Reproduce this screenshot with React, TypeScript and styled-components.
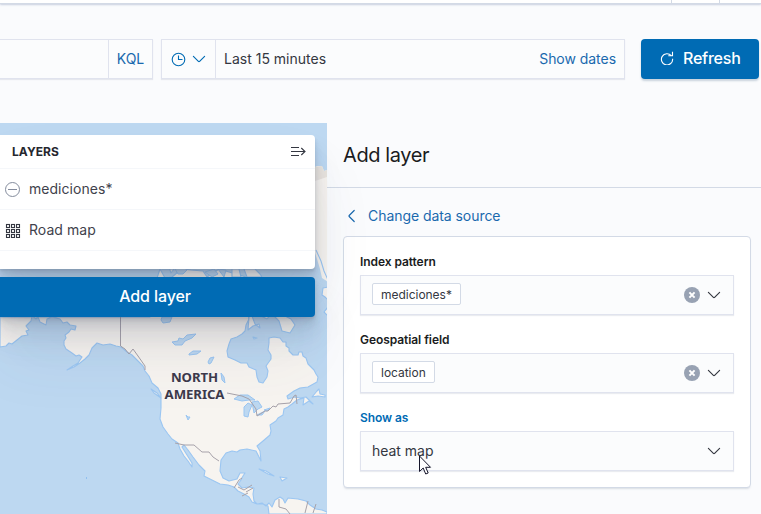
import React from "react";
import styled, { createGlobalStyle } from "styled-components";

const GlobalStyle = createGlobalStyle`
  * { box-sizing: border-box; }
  html, body { margin: 0; overflow: hidden; }
  body {
    background: #fafbfd;
    color: #343741;
    font: 400 14px/20px Inter, "Liberation Sans", sans-serif;
    letter-spacing: -0.005em;
  }
  button { font: inherit; letter-spacing: inherit; border: 0; padding: 0; background: none; }
  svg { display: block; flex: none; }
`;

const Page = styled.div`
  width: 761px;
  height: 514px;
  display: flex;
  flex-direction: column;
  overflow: hidden;
`;

const TopBar = styled.header`
  height: 4px;
  flex: none;
  display: flex;
  justify-content: flex-end;
  padding-right: 41px;
  background: #fff;
  border-bottom: 1px solid #d3dae6;
  box-shadow: 0 1px 2px rgba(130, 145, 180, 0.4);
`;

const TopBarCell = styled.div`
  width: 49px;
  border: solid #d3dae6;
  border-width: 0 1px;
`;

const QueryBar = styled.div`
  display: flex;
  height: 40px;
  flex: none;
  margin: 35px 0 44px;
`;

const ControlGroup = styled.div<{ $width: number; $gap: number; $open?: boolean }>`
  display: flex;
  width: ${(p) => p.$width}px;
  margin-right: ${(p) => p.$gap}px;
  border: 1px solid #e0e3ee;
  border-left-width: ${(p) => (p.$open ? 0 : 1)}px;
  background: #fbfcfd;
  box-shadow: 0 1px 1px rgba(152, 162, 179, 0.2);
`;

const QueryInput = styled.div`
  flex: 1;
  border-right: 1px solid #e0e3ee;
`;

const LinkButton = styled.button`
  width: 43px;
  color: #1a69ae;
`;

const QuickSelect = styled.button`
  display: flex;
  align-items: center;
  gap: 6px;
  width: 54px;
  padding-left: 9px;
  border-right: 1px solid #e0e3ee;
  color: #006bb4;
`;

const DateText = styled.span`
  flex: 1;
  padding-left: 8px;
  line-height: 38px;
  letter-spacing: 0;
`;

const ShowDates = styled.span`
  padding-right: 8px;
  line-height: 38px;
  color: #1a69ae;
  letter-spacing: -0.003em;
`;

const RefreshButton = styled.button`
  display: flex;
  align-items: center;
  width: 118px;
  padding: 0 0 2px 19px;
  gap: 9px;
  border-radius: 4px;
  background: #006bb4;
  color: #fff;
  font-size: 16px;
  font-weight: 500;
  letter-spacing: -0.014em;
  box-shadow: 0 2px 2px rgba(54, 97, 126, 0.25);
`;

const Body = styled.main`
  display: flex;
  flex: 1;
  min-height: 0;
`;

const MapArea = styled.section`
  position: relative;
  z-index: 1;
  width: 327px;
  flex: none;
`;

const MapSvg = styled.svg`
  width: 327px;
  height: 391px;
`;

const LayerControl = styled.div`
  position: absolute;
  top: 12px;
  left: 0;
  width: 315px;
  display: flex;
  flex-direction: column;
  gap: 8px;
`;

const deepShadow = `
  0 40px 64px rgba(65, 78, 101, 0.08), 0 24px 32px rgba(65, 78, 101, 0.08),
  0 16px 16px rgba(65, 78, 101, 0.08), 0 8px 8px rgba(65, 78, 101, 0.09),
  0 4px 4px rgba(65, 78, 101, 0.1), 0 2px 2px rgba(65, 78, 101, 0.1)`;

const LayersCard = styled.div`
  height: 134px;
  background: #fff;
  border-radius: 0 4px 4px 0;
  box-shadow: ${deepShadow};
`;

const LayersHeader = styled.div`
  display: flex;
  align-items: center;
  justify-content: space-between;
  height: 34px;
  padding: 0 9px 0 12px;
  border-bottom: 1px solid #f5f7fa;
  color: #25272e;
  font-size: 12px;
  font-weight: 700;
  letter-spacing: 0.004em;
`;

const LayerRow = styled.div`
  display: flex;
  align-items: center;
  height: 41px;
  gap: 8px;
  padding-left: 5px;
  border-bottom: 1px solid #f5f7fa;
  color: #3f424c;
  letter-spacing: 0.003em;
`;

const AddLayerButton = styled.button`
  height: 40px;
  padding-right: 5px;
  padding-bottom: 2px;
  border-radius: 0 4px 4px 0;
  background: #006bb4;
  color: #fff;
  font-size: 16px;
  font-weight: 500;
  letter-spacing: -0.008em;
  box-shadow: ${deepShadow};
`;

const Panel = styled.aside`
  flex: 1;
  display: flex;
  flex-direction: column;
`;

const PanelHeader = styled.h2`
  margin: 0;
  height: 65px;
  padding: 0 0 1px 16px;
  border-bottom: 1px solid #d3dae6;
  color: #1a1c21;
  font-size: 20px;
  font-weight: 400;
  line-height: 64px;
  letter-spacing: -0.02em;
`;

const BackLink = styled.button`
  display: flex;
  align-items: center;
  height: 20px;
  margin: 18px 0 10px 18px;
  gap: 9px;
  color: #1a69ae;
  letter-spacing: -0.004em;
`;

const FormCard = styled.div`
  display: flex;
  flex-direction: column;
  gap: 16px;
  width: 408px;
  height: 252px;
  margin-left: 16px;
  padding: 16px;
  background: #fff;
  border: 1px solid #d3dae6;
  border-radius: 4px;
  box-shadow: 0 2px 2px -1px rgba(152, 162, 179, 0.35);
`;

const Field = styled.div<{ $focused?: boolean }>`
  display: flex;
  flex-direction: column;
  gap: 4px;
  height: 62px;
  color: ${(p) => (p.$focused ? "#006bb4" : "#1a1c21")};
  font-size: 12px;
  font-weight: 600;
  line-height: 18px;
`;

const SelectBox = styled.div`
  display: flex;
  align-items: center;
  width: 374px;
  height: 40px;
  gap: 7px;
  padding: 0 12px 0 11px;
  border: 1px solid #e0e3ee;
  background: #fbfcfd;
  box-shadow: 0 1px 1px rgba(152, 162, 179, 0.2);
  color: #343741;
  font-weight: 400;
`;

const Pill = styled.span`
  height: 22px;
  margin: 0 auto 2px 0;
  padding: 0 8px;
  border: 1px solid #d3dae6;
  border-radius: 2px;
  background: #fff;
  line-height: 21px;
  letter-spacing: -0.002em;
`;

const SelectText = styled.span`
  margin-right: auto;
  font-size: 14px;
  letter-spacing: -0.002em;
`;

const Cursor = styled.svg`
  position: absolute;
  left: 418px;
  top: 455px;
  z-index: 2;
`;

const Chevron = () => (
  <svg width="14" height="14" viewBox="0 0 14 14" fill="none" stroke="currentColor" strokeWidth="1.15" strokeLinecap="round">
    <path d="M1.4 4.4 6.4 9.3q.6.6 1.2 0l5-4.9" />
  </svg>
);

const ClearIcon = () => (
  <svg width="16" height="16" viewBox="0 0 16 16">
    <circle cx="8" cy="8" r="8" fill="#98a2b3" />
    <path d="m5.400 5.400 5.200 5.200m0-5.200-5.200 5.200" stroke="#fff" strokeWidth="2" />
  </svg>
);

const LAND = `M0 347 6 346 9 343 12 344 17 340 22 336 28 335 26 331 29 330 26 326 31 321 32 316 36 319
 38 317 40 322 46 325 47 319 52 317 60 319 63 323 67 322 70 325 76 326 75 330 71 329 69 332 65 335
 66 338 64 341 64 345 66 349 72 353 76 356 79 355 82 357 78 363 73 366 67 370 74 367 80 363 85 359
 89 355 92 348 97 343 103 345 110 344 116 346 121 347 127 352 132 355 138 361 143 366 145 371
 149 376 152 383 158 388 161 394 161 408 160 419 163 427 168 434 172 439 178 443 180 449 184 456
 188 461 192 467 192 463 187 455 182 447 184 445 188 450 193 457 199 465 205 471 204 476 212 480
 220 484 228 485 234 487 238 491 244 494 249 497 252 502 257 504 262 503 266 506 269 503 272 507
 275 500 280 497 283 499 285 503 288 498 298 499 306 501 310 505 316 509 322 510 327 512 327 514
 269 514 268 506 263 504 257 504 254 501 253 494 254 488 248 487 242 488 238 484 241 480
 243 476 245 473 240 473 237 479 229 481 223 478 220 471 221 460 226 453 232 451 237 452 240 450
 247 449 256 451 259 457 261 461 260 451 257 446 263 441 270 435 271 431 270 425 276 421 278 418
 283 415 284 409 288 407 292 404 297 400 304 398 303 405 309 401 313 404 306 397 300 398 295 397
 288 399 287 396 294 391 300 388 308 387 317 382 318 377 316 374 314 370 308 364 306 358 303 356
 302 352 299 352 298 355 293 355 289 351 289 348 286 346 286 342 283 342 280 338 274 337
 269 338 269 343 268 350 271 355 271 359 266 366 268 371 267 377 263 383 259 382 257 377 256 370
 249 367 247 363 241 363 235 360 228 357 227 351 229 344 231 339 237 337 242 334 245 331 246 325
 249 319 246 277 219 269 207 277 203 271 191 270 184 269 178 272 172 277 165 278 160 269 155 284
 150 317 120 317 0 317Z`;

const WorldMap = () => (
  <MapSvg viewBox="0 123 327 391">
    <rect y="123" width="327" height="391" fill="#bdd8f1" />
    <g fill="#f7f4f0" stroke="#9bc6f2" strokeWidth="1.100" strokeLinejoin="round">
      <path d={LAND} />
      <path d="M315 167 317 166 322 166 324 171 327 170 328 282 322 278 320 269 317 259 313 247Z" stroke="none" />
      <path d="m316 250 5 11 3 10 4 9m0 7-5 1-1 7 3 2 3 3m0 7-4 5 4 4" />
      <path d="m249 317-1 13 5-4 6-2 1 4-5-4-3-8m7-1 8 4 4-5m4 3 4 4 3 10 8 2 5-8-4-6-6-3-3-8ZM162 269l5-7 4 11 3-4ZM232 269l7 0 2 8h-9Zm12 0h11l5 5 2 3h-15Z" />
      <path d="M312 397 317 391 319 389 320 394 325 395 325 397 318 396ZM259 469 266 471 274 476 268 474ZM280 477 287 478 282 481ZM253 337l4 1-3 1zM151 389l6 4 4 5-7-5Z" />
    </g>
    <path d="M315 167 322 166 324 171 327 170V177L315 181Z" fill="#e9e4df" />
    <g fill="#bdd8f1" stroke="#9bc6f2" strokeWidth="1">
      <path d="m172 342 6-1 1-3 4 1 4-4 9-1-4 4-7 3-3 4-7 0Zm17 12 4-3 8 0-4 3-8 1Zm19 8 2-4 4-1-3 6-2 1Z" />
      <path d="m162 317 10 0-2 5-7 1-2-3ZM221 373l3 4 1 6-3-3ZM186 415l2 2 2 0-2 3Z" />
      <path d="m234 399 6-4 8 0 7 5-6 0-7 1ZM244 407l4-4 4 2-3 7-1 5-4-1ZM252 402l6-1 4 6-4 2-4 4ZM257 415l8-4-3 4ZM264 410l6-2-3 3Z" />
      <path d="m175 269 8-2 4 3-4 4-5 0Zm30 3 9-3 4 5-6 3ZM218 269l8 1-2 7Z" />
    </g>
    <g fill="none" stroke="#a7a2aa" strokeWidth="1">
      <path d="M120.500 317V346L125 349 129 354 133 349 138 356 145 366 145 370" />
      <path d="m227 393 15 3 7 3 7 10 1 7 8-5 3 0 5-5 3 1 2-3 12-1 4-7 2-1 1 9M175 443l9 2 10 0 8 7 7 0 4 5 6 4M234 488l5-8 3-2m-4 9 6 3 8-5M246 492l7-4m-11 8 6-3m31 6 0 8 7 2 4 5m18-13-3 12m11-9-3 9" />
    </g>
    <path d="M86 477h1v2h-1Z" fill="#91c0f0" />
    <g fill="#3c394b" stroke="#f8f6f4" strokeWidth="2" paintOrder="stroke" fontFamily="Noto Sans, sans-serif" fontSize="13.200" fontWeight="700" textAnchor="middle">
      <text x="194.500" y="382">NORTH</text>
      <text x="194.500" y="398.500">AMERICA</text>
    </g>
  </MapSvg>
);

const ClockIcon = () => (
  <svg width="15" height="15" viewBox="0 0 15 15" fill="none" stroke="currentColor" strokeWidth="1.100">
    <circle cx="7.500" cy="7.500" r="6.300" />
    <path d="M7.500 3.500v4h4" />
  </svg>
);

const RefreshIcon = () => (
  <svg width="14" height="14" viewBox="0 0 14 14" fill="none" stroke="currentColor" strokeWidth="1.100">
    <path d="M11.300 4.700A5.600 5.600 0 1 0 12.600 7.800M12.500.800v4H8.300" />
  </svg>
);

const CollapseIcon = () => (
  <svg width="16" height="14" viewBox="0 0 16 14" fill="none" stroke="#343741" strokeWidth="1.100">
    <path d="M1 2.500h8M1 6.500h14M1 10.500h8M11.300 3 15 6.500 11.300 10" />
  </svg>
);

const MinusIcon = () => (
  <svg width="16" height="16" viewBox="0 0 16 16" fill="none" stroke="#848c9d">
    <circle cx="7.500" cy="8.500" r="7" />
    <path d="M3 8.500h9" />
  </svg>
);

const CELLS = [1.5, 6.5, 11.5];

const GridIcon = () => (
  <svg width="16" height="16" viewBox="0 0 16 16" fill="none" stroke="#343741" strokeWidth="1.100">
    {CELLS.map((y) => CELLS.map((x) => <rect key={`${x}-${y}`} x={x} y={y + 1} width="3" height="3" />))}
  </svg>
);

const BackIcon = () => (
  <svg width="14" height="14" viewBox="0 0 14 14" fill="none" stroke="currentColor" strokeWidth="1.200" strokeLinecap="round">
    <path d="M9.200 1.500 4.200 6.500q-.5.5 0 1l5 5" />
  </svg>
);

export default function App() {
  return (
    <Page>
      <GlobalStyle />
      <TopBar>
        <TopBarCell />
      </TopBar>
      <QueryBar>
        <ControlGroup $width={153} $gap={8} $open>
          <QueryInput />
          <LinkButton>KQL</LinkButton>
        </ControlGroup>
        <ControlGroup $width={464} $gap={16}>
          <QuickSelect>
            <ClockIcon />
            <Chevron />
          </QuickSelect>
          <DateText>Last 15 minutes</DateText>
          <ShowDates>Show dates</ShowDates>
        </ControlGroup>
        <RefreshButton>
          <RefreshIcon />
          Refresh
        </RefreshButton>
      </QueryBar>
      <Body>
        <MapArea>
          <WorldMap />
          <LayerControl>
            <LayersCard>
              <LayersHeader>
                LAYERS
                <CollapseIcon />
              </LayersHeader>
              <LayerRow>
                <MinusIcon />
                mediciones*
              </LayerRow>
              <LayerRow>
                <GridIcon />
                Road map
              </LayerRow>
            </LayersCard>
            <AddLayerButton>Add layer</AddLayerButton>
          </LayerControl>
        </MapArea>
        <Panel>
          <PanelHeader>Add layer</PanelHeader>
          <BackLink>
            <BackIcon />
            Change data source
          </BackLink>
          <FormCard>
            <Field>
              Index pattern
              <SelectBox>
                <Pill>mediciones*</Pill>
                <ClearIcon />
                <Chevron />
              </SelectBox>
            </Field>
            <Field>
              Geospatial field
              <SelectBox>
                <Pill>location</Pill>
                <ClearIcon />
                <Chevron />
              </SelectBox>
            </Field>
            <Field $focused>
              Show as
              <SelectBox>
                <SelectText>heat map</SelectText>
                <Chevron />
              </SelectBox>
            </Field>
          </FormCard>
        </Panel>
      </Body>
      <Cursor width="14" height="22" viewBox="0 0 14 22">
        <path d="M1.500 1v15.500l3.700-3.500 2.500 6 2.500-1-2.500-5.700h4.800Z" fill="#fff" stroke="#15152a" strokeWidth="1" />
      </Cursor>
    </Page>
  );
}
